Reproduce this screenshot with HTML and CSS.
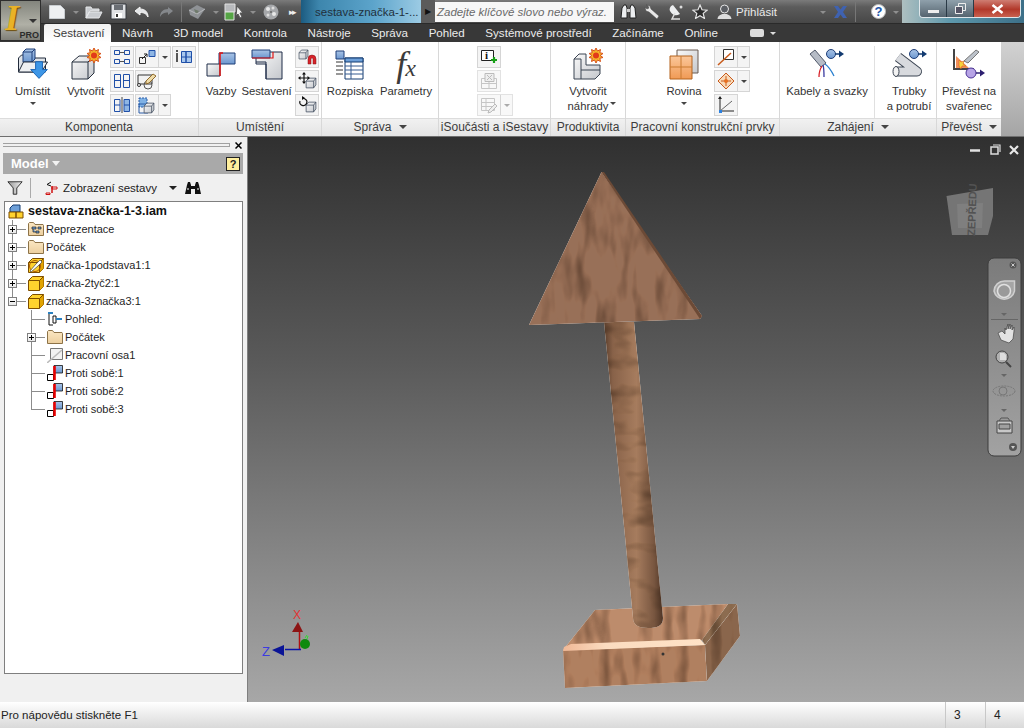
FILE: index.html
```html
<!DOCTYPE html>
<html lang="cs">
<head>
<meta charset="utf-8">
<title>Autodesk Inventor</title>
<link rel="stylesheet" href="styles.css">
</head>
<body>
<svg class="defs" aria-hidden="true">
  <defs>
    <linearGradient id="gFolder" x1="0" y1="0" x2="0" y2="1"><stop offset="0" stop-color="#fbe7c3"/><stop offset="1" stop-color="#eccf9f"/></linearGradient>
    <linearGradient id="gBlue" x1="0" y1="0" x2="0" y2="1"><stop offset="0" stop-color="#a9c4e6"/><stop offset="1" stop-color="#6c97cf"/></linearGradient>
    <linearGradient id="gCube" x1="0" y1="0" x2="1" y2="1"><stop offset="0" stop-color="#fafafa"/><stop offset="1" stop-color="#c4c7cc"/></linearGradient>
    <linearGradient id="gOrange" x1="0" y1="0" x2="0" y2="1"><stop offset="0" stop-color="#fbc79a"/><stop offset="1" stop-color="#f09a55"/></linearGradient>
    <linearGradient id="gFunnel"><stop offset="0" stop-color="#999"/><stop offset="1" stop-color="#eee"/></linearGradient>
    <symbol id="folder" viewBox="0 0 16 16"><path d="M.5 14.500V2.500l1-1h4l1.500 2h8l.5 1v10z" fill="url(#gFolder)" stroke="#8d7348"/></symbol>
    <symbol id="ycube" viewBox="0 0 16 16"><path d="M.5 5.500l4-4h11v10l-4 4H.5z" fill="#ffd22e" stroke="#7d4d00"/><path d="M11.500 5.500l4-4v10l-4 4z" fill="#e2a400"/><path d="M.5 5.500h11v10M11.500 5.500l4-4" fill="none" stroke="#7d4d00"/></symbol>
    <symbol id="mate" viewBox="0 0 16 16"><path d="M7 .5h8.500v7.500H7z" fill="url(#gBlue)" stroke="#111" stroke-width=".8"/><path d="M.5 9.500h6v6h-6z" fill="#fff" stroke="#000"/><path d="M7.500 1v14" stroke="#e80000" stroke-width="2.600"/></symbol>
    <symbol id="cubeS" viewBox="0 0 16 16"><path d="M1.500 5.500l3.500-4h9.500v9l-3 4h-10z" fill="url(#gCube)" stroke="#3d4a5c"/><path d="M1.500 5.500h10v9M11.500 5.500l3-4" fill="none" stroke="#3d4a5c"/></symbol>
  </defs>
</svg>

<header class="top">
  <div class="app">
    <span class="app-i">I</span>
    <span class="app-arrow"></span>
    <span class="app-pro">PRO</span>
  </div>
  <div class="top-right">
    <div class="titlebar">
      <span class="q"><svg width="18" height="16" viewBox="0 0 18 16"><path d="M1.500 1.500h11l4 4v9h-15z" fill="#eef0f2" stroke="#c8ccd0"/></svg></span>
      <span class="qa"></span>
      <span class="q"><svg width="18" height="14" viewBox="0 0 18 14"><path d="M1 13V2h5l1 2h7v2H5L1 13l3-6h13l-3 6z" fill="#c9ccd0" stroke="#e6e8ea"/></svg></span>
      <span class="q"><svg width="17" height="17" viewBox="0 0 17 17"><path d="M1 1h15v15H1z" fill="#dfe1e4" stroke="#30343a"/><path d="M4 2h9v5H4z" fill="#6a6e74"/><path d="M5 10h7v5H5z" fill="#fff"/><path d="M6 11h2v3H6z" fill="#333"/></svg></span>
      <span class="q"><svg width="16" height="12" viewBox="0 0 16 12"><path d="M6 1L1 5l5 4V6.500c4 0 6 1 8 4.500 0-5-3-8-8-8z" fill="#e4e6e8" stroke="#f5f5f5"/></svg></span>
      <span class="q"><svg width="16" height="12" viewBox="0 0 16 12"><path d="M10 1l5 4-5 4V6.500c-4 0-6 1-8 4.500 0-5 3-8 8-8z" fill="#85888c"/></svg></span>
      <span class="qsep"></span>
      <span class="q"><svg width="18" height="16" viewBox="0 0 18 16"><path d="M1 6l8-5 8 4-7 10-8-4z" fill="#8f9296"/><path d="M6 5l5 2-3 4z" fill="#6f7a6c"/><path d="M1 6l8 4 8-5" fill="none" stroke="#b5b7ba"/></svg></span>
      <span class="qa"></span>
      <span class="q"><svg width="21" height="18" viewBox="0 0 21 18"><path d="M1 1h10v8H1z" fill="#b8babd" stroke="#e2e2e2"/><path d="M1 9h9v8H1z" fill="#55a545" stroke="#e2e2e2"/><path d="M13 3l6 7h-3l2 4-2 1-2-4-2 2z" fill="#f2f2f2" stroke="#555"/></svg></span>
      <span class="qa"></span>
      <span class="q"><svg width="16" height="16" viewBox="0 0 16 16"><circle cx="8" cy="8" r="7.500" fill="#a5a7aa"/><circle cx="5" cy="5" r="2" fill="#e8e8e8"/><circle cx="10" cy="4" r="1.500" fill="#ddd"/><circle cx="11" cy="10" r="2" fill="#e8e8e8"/><circle cx="5" cy="11" r="1.500" fill="#ddd"/><circle cx="8" cy="8" r="1" fill="#666"/></svg></span>
      <span class="qmore">&#9656;&#9656;</span>
      <span class="doc">sestava-značka-1-...</span>
      <span class="doc-more">&#9654;</span>
      <span class="search">Zadejte klíčové slovo nebo výraz.</span>
      <span class="q"><svg width="17" height="15" viewBox="0 0 17 15"><path d="M1 14l1-10 2-3h2l1 3v10zM16 14l-1-10-2-3h-2l-1 3v10z" fill="#eceef0" stroke="#222"/><path d="M7 5h3v3H7z" fill="#ccc"/></svg></span>
      <span class="q"><svg width="17" height="16" viewBox="0 0 17 16"><path d="M2 1l4 1 1 3 8 7-2 3-8-7-3-1-1-4 2 2 2-1-1-2z" fill="#e8e8e8" stroke="#444" stroke-width=".5"/></svg></span>
      <span class="q"><svg width="17" height="16" viewBox="0 0 17 16"><path d="M2 7c3 5 6 5 10 3L5 1C2 2 1 5 2 7z" fill="#eceef0"/><path d="M7 9l-3 6h8" stroke="#ddd" fill="none" stroke-width="1.500"/><circle cx="13" cy="3" r="1.500" fill="#ddd"/></svg></span>
      <span class="q"><svg width="16" height="15" viewBox="0 0 16 15"><path d="M8 1l2 4.800 5 .4-3.800 3.200 1.200 5L8 11.700 3.600 14.400l1.200-5L1 6.200l5-.4z" fill="#2b2b2b" stroke="#e6e6e6" stroke-width="1.200"/></svg></span>
      <span class="q"><svg width="17" height="16" viewBox="0 0 17 16"><circle cx="8.500" cy="5" r="4" fill="#5a5d62" stroke="#e8e8e8"/><path d="M1.500 15c.5-4 3-4 5-5h4c2 1 4.500 1 5 5z" fill="#dcdcdc"/></svg></span>
      <span class="login">Přihlásit</span>
      <span class="qa qa-w"></span>
      <span class="q"><svg width="15" height="12" viewBox="0 0 15 12"><path d="M1 0h4l2.500 3.500L10 0h4l-4 6 4 6h-4L7.500 8.500 5 12H1l4-6z" fill="#3f62b0"/></svg></span>
      <span class="qsep qsep-r"></span>
      <span class="help">?</span>
      <span class="qa qa-h"></span>
      <div class="glass">
        <div class="wincontrols">
          <span class="wc wc-min"><i class="wc-dash"></i></span>
          <span class="wc wc-max"><svg width="11" height="11" viewBox="0 0 11 11"><path d="M3.500.5h7v7h-7z" fill="none" stroke="#eee"/><path d="M.5 3.500h7v7h-7z" fill="#556" stroke="#eee"/></svg></span>
          <span class="wc wc-close"><svg width="13" height="10" viewBox="0 0 13 10"><path d="M1.500 1l10 8M11.500 1l-10 8" stroke="#fff" stroke-width="2.500"/></svg></span>
        </div>
      </div>
    </div>
    <nav class="tabs">
      <span class="tab tab-on">Sestavení</span>
      <span class="tab">Návrh</span>
      <span class="tab">3D model</span>
      <span class="tab">Kontrola</span>
      <span class="tab">Nástroje</span>
      <span class="tab">Správa</span>
      <span class="tab">Pohled</span>
      <span class="tab">Systémové prostředí</span>
      <span class="tab">Začínáme</span>
      <span class="tab">Online</span>
      <span class="tabview"><i class="tabview-pill"></i><i class="tabview-arrow"></i></span>
    </nav>
  </div>
</header>

<section class="ribbon">
  <!-- Komponenta -->
  <div class="panel p-komp">
    <div class="pbody">
      <div class="lg w53">
        <svg class="lgi" width="32" height="32" viewBox="0 0 32 32"><path d="M1.500 24V10l3-3h8l2 3h14v14z" fill="#dfe3e8" stroke="#222c3c"/><path d="M6 4l3-3h9v10l-3 3H6z" fill="url(#gBlue)" stroke="#1f3e78"/><path d="M6 4h9v10M15 4l3-3" fill="none" stroke="#1f3e78"/><path d="M1.500 24l5-10h24l-6 10z" fill="#eef0f2" stroke="#222c3c"/><path d="M20 14h7v8h5l-8.500 9L15 22h5z" fill="#3d96e6" stroke="#1b64b4" transform="translate(-1 0) scale(.98 .98)"/></svg>
        <span class="lbl">Umístit</span>
        <i class="dd"></i>
      </div>
      <div class="lg w53">
        <svg class="lgi" width="32" height="32" viewBox="0 0 32 32"><path d="M2 14l7-6h15v17l-6 6H2z" fill="url(#gCube)" stroke="#27303e"/><path d="M2 14h16v17M18 14l6-6" fill="none" stroke="#27303e"/><path d="M24 0l1.500 3 3-1.500-.7 3.200 3.200.8-2.800 2 2.800 2-3.200.8.700 3.200-3-1.500L24 15l-1.500-3-3 1.500.7-3.200-3.200-.8 2.800-2-2.800-2 3.200-.8-.7-3.200 3 1.500z" fill="#f5b52a" stroke="#d8501a"/><circle cx="24" cy="7.500" r="3" fill="#e23a1a"/></svg>
        <span class="lbl">Vytvořit</span>
      </div>
      <div class="smcols">
        <div class="smcol">
          <span class="sm"><svg width="18" height="16" viewBox="0 0 18 16"><g fill="none" stroke="#1f4fa8"><path d="M1.500 1.500h5v4h-5zM11.500 1.500h5v4h-5zM1.500 10.500h5v4h-5zM11.500 10.500h5v4h-5z"/><path d="M6.500 3.500h5M6.500 12.500h5" stroke="#555"/></g></svg></span>
          <span class="sm"><svg width="18" height="16" viewBox="0 0 18 16"><g fill="none" stroke="#1f4fa8"><path d="M1.500 1.500h6v13h-6zM10.500 1.500h6v13h-6zM1.500 7.500h6M10.500 7.500h6"/></g></svg></span>
          <span class="sm"><svg width="18" height="16" viewBox="0 0 18 16"><g fill="none" stroke="#1f4fa8"><path d="M1.500 2.500h5.500v12H1.500zM1.500 8h5.500"/></g><path d="M9 0v16" stroke="#444"/><path d="M11 2.500h5.500v12H11z" fill="#8fb6e4" stroke="#1f4fa8"/><path d="M11 8h5.500" stroke="#1f4fa8"/></svg></span>
        </div>
        <div class="smcol">
          <span class="sm sm-split"><span class="sm-main"><svg width="18" height="16" viewBox="0 0 18 16"><path d="M1.500 8.500h6v6h-6z" fill="none" stroke="#333"/><path d="M11 1.500h6v6h-6z" fill="#8fb6e4" stroke="#1f4fa8"/><path d="M4 10L9 5M9 5H6M9 5v3" fill="none" stroke="#222"/></svg></span><i class="dd-s"></i></span>
          <span class="sm sm-wide"><svg width="22" height="18" viewBox="0 0 22 18"><path d="M2 3h14v9H2z" fill="#f2f2f2" stroke="#333"/><circle cx="12" cy="13" r="4" fill="none" stroke="#555"/><circle cx="3" cy="13" r="1.500" fill="#fff" stroke="#333"/><path d="M10 9l7-7 3 2-7 7-3 1z" fill="#eedba8" stroke="#8f6a2c"/></svg></span>
          <span class="sm sm-split"><span class="sm-main"><svg width="18" height="17" viewBox="0 0 18 17"><path d="M1 1h8v9H1z" fill="#7fb1e4" stroke="#2b5ca8" stroke-dasharray="2 1"/><path d="M1 7h9v9H1z" fill="none" stroke="#2b5ca8"/><use href="#cubeS" x="5" y="5" width="12" height="12"/></svg></span><i class="dd-s"></i></span>
        </div>
        <div class="smcol">
          <span class="sm"><svg width="18" height="14" viewBox="0 0 18 14"><path d="M2 3v9M1 1h2" stroke="#222" stroke-width="1.500"/><path d="M6.500 1.500h4.500v11H6.500zM11 1.500h5.500v11H11zM6.500 7h10" fill="#a9c8ee" stroke="#1f4fa8"/></svg></span>
        </div>
      </div>
    </div>
    <div class="pfoot">Komponenta</div>
  </div>

  <!-- Umístění -->
  <div class="panel p-umis">
    <div class="pbody">
      <div class="lg w44">
        <svg class="lgi" width="32" height="32" viewBox="0 0 32 32"><path d="M14 5h16v11H14z" fill="url(#gBlue)" stroke="#1f3e78"/><path d="M2 16h13v12H2z" fill="url(#gCube)" stroke="#1f2c48"/><path d="M15 28V5h3" fill="none" stroke="#e01515" stroke-width="1.500"/></svg>
        <span class="lbl">Vazby</span>
      </div>
      <div class="lg w47">
        <svg class="lgi" width="32" height="32" viewBox="0 0 32 32"><path d="M5 6h26v27H15V18H5z" fill="url(#gCube)" stroke="#1f2c48" transform="translate(0 -2)"/><path d="M5 14h10v17" fill="none" stroke="#1f2c48"/><path d="M1 2h18v8H1z" fill="url(#gBlue)" stroke="#1f3e78"/><path d="M1 10h21V4" fill="none" stroke="#e01515" stroke-width="1.200"/></svg>
        <span class="lbl">Sestavení</span>
      </div>
      <div class="smcol smcol-u">
        <span class="sm"><svg width="19" height="16" viewBox="0 0 19 16"><use href="#cubeS" x="0" y="0" width="11" height="11"/><path d="M10 15v-5a4 4 0 0 1 8 0v5h-3v-5a1 1 0 0 0-2 0v5z" fill="#d8232a" stroke="#801010" stroke-width=".5"/></svg></span>
        <span class="sm"><svg width="19" height="18" viewBox="0 0 19 18"><use href="#cubeS" x="7" y="5" width="12" height="12"/><path d="M6 1v10M1 6h10" stroke="#111" stroke-width="1.200"/><path d="M6 0L4 2.500h4zM6 12l-2-2.500h4zM0 6l2.500-2v4zM12 6L9.500 4v4z" fill="#111"/></svg></span>
        <span class="sm"><svg width="19" height="18" viewBox="0 0 19 18"><use href="#cubeS" x="7" y="5" width="12" height="12"/><path d="M2 5a3.500 3.500 0 1 0 5-2L5 2" fill="none" stroke="#111" stroke-width="1.200"/><path d="M4 0v4l3-2z" fill="#111"/></svg></span>
      </div>
    </div>
    <div class="pfoot">Umístění</div>
  </div>

  <!-- Správa -->
  <div class="panel p-sprava">
    <div class="pbody">
      <div class="lg w56">
        <svg class="lgi" width="32" height="32" viewBox="0 0 32 32"><path d="M2 3h8v8H2z" fill="url(#gBlue)" stroke="#1f3e78"/><path d="M2 14h7M2 18h7M2 22h7M2 26h7" stroke="#333"/><path d="M11 10h18v21H11z" fill="#fff" stroke="#123a70"/><path d="M11 10h18v4H11z" fill="#6d9fd8" stroke="#123a70"/><path d="M11 18h18M11 22h18M11 26h18M17 14v17" stroke="#345a90"/></svg>
        <span class="lbl">Rozpiska</span>
      </div>
      <div class="lg w56">
        <span class="fx"><i>f</i><i class="fx-x">x</i></span>
        <span class="lbl">Parametry</span>
      </div>
    </div>
    <div class="pfoot">Správa<i class="ft-dd"></i></div>
  </div>

  <!-- iSoučásti -->
  <div class="panel p-isou">
    <div class="pbody pbody-c">
      <div class="smcol smcol-i">
        <span class="sm"><svg width="18" height="16" viewBox="0 0 18 16"><path d="M1.500 1.500h12v10h-12z" fill="#fff" stroke="#222"/><text x="5" y="10" class="i-t">i</text><path d="M11 11h6M14 8v6" stroke="#18a018" stroke-width="2.200"/></svg></span>
        <span class="sm sm-off"><svg width="18" height="18" viewBox="0 0 18 18"><path d="M1.500 6.500h15v10h-15zM1.500 11.500h15M9 6.500v10" fill="none" stroke="#c6c6c6"/><path d="M5 1.500h9v8H5z" fill="#eee" stroke="#bbb"/><path d="M7 3l5 5M12 3L7 8" stroke="#bbb"/></svg></span>
        <span class="sm sm-split sm-off"><span class="sm-main"><svg width="18" height="17" viewBox="0 0 18 17"><path d="M1.500 1.500h13v12h-13zM1.500 5.500h13M1.500 9.500h13M6 1.500v12" fill="none" stroke="#c6c6c6"/><path d="M9 13l6-6 2 2-6 6-3 1z" fill="#eee" stroke="#bbb"/></svg></span><i class="dd-s dd-off"></i></span>
      </div>
    </div>
    <div class="pfoot">iSoučásti a iSestavy</div>
  </div>

  <!-- Produktivita -->
  <div class="panel p-prod">
    <div class="pbody">
      <div class="lg w-full">
        <svg class="lgi" width="32" height="32" viewBox="0 0 32 32"><path d="M2 11l5-5h7v11h14v9l-5 5H2z" fill="url(#gCube)" stroke="#3b4452"/><path d="M2 11h7v11h19M9 22v9M7 6L2 11" fill="none" stroke="#3b4452"/><path d="M24 0l1.500 3 3-1.500-.7 3.200 3.200.8-2.800 2 2.800 2-3.200.8.700 3.200-3-1.500L24 15l-1.500-3-3 1.500.7-3.200-3.200-.8 2.800-2-2.800-2 3.200-.8-.7-3.200 3 1.500z" fill="#f5b52a" stroke="#d8501a"/><circle cx="24" cy="7.500" r="3" fill="#e23a1a"/></svg>
        <span class="lbl">Vytvořit<br>náhrady<i class="dd-in"></i></span>
      </div>
    </div>
    <div class="pfoot">Produktivita</div>
  </div>

  <!-- Pracovní konstrukční prvky -->
  <div class="panel p-prac">
    <div class="pbody">
      <div class="lg w-rov">
        <svg class="lgi" width="32" height="32" viewBox="0 0 32 32"><path d="M9 2h21v23H9z" fill="url(#gCube)" stroke="#6a5a50"/><path d="M2 8h22v23H2z" fill="url(#gOrange)" stroke="#b4621c"/><path d="M2 19h22M13 8v23" stroke="#c97a30"/></svg>
        <span class="lbl">Rovina</span>
        <i class="dd"></i>
      </div>
      <div class="smcol">
        <span class="sm sm-split"><span class="sm-main"><svg width="18" height="18" viewBox="0 0 18 18"><path d="M6.500 1.500h10v10h-10z" fill="#fff" stroke="#333"/><path d="M1 17L14 5" stroke="#c85a1a" stroke-width="1.500"/></svg></span><i class="dd-s"></i></span>
        <span class="sm sm-split"><span class="sm-main"><svg width="18" height="18" viewBox="0 0 18 18"><path d="M9 1l8 8-8 8-8-8z" fill="#f8d9b8" stroke="#c85a1a"/><path d="M9 4v10M4 9h10" stroke="#c85a1a"/><circle cx="9" cy="9" r="2" fill="#e87020"/></svg></span><i class="dd-s"></i></span>
        <span class="sm"><svg width="18" height="18" viewBox="0 0 18 18"><path d="M3 1v14h14" fill="none" stroke="#222"/><path d="M3 15L15 5" stroke="#666"/><path d="M1 3l2-3 2 3z" fill="#222"/><path d="M2 14h3v3H2z" fill="#2a80e0"/></svg></span>
      </div>
    </div>
    <div class="pfoot">Pracovní konstrukční prvky</div>
  </div>

  <!-- Zahájení -->
  <div class="panel p-zah">
    <div class="pbody">
      <div class="lg w-kab">
        <svg class="lgi" width="36" height="32" viewBox="0 0 36 32"><path d="M1 6l5-4 11 13-5 4z" fill="#b6bcc6" stroke="#50596a"/><path d="M13 18c-2 3-3 6-3 11" fill="none" stroke="#d8232a" stroke-width="1.300"/><path d="M14 17c1 3 1 6 1 12" fill="none" stroke="#3a3aa0" stroke-width="1.300"/><path d="M16 16c3 2 6 6 9 12" fill="none" stroke="#2a80d0" stroke-width="1.300"/><circle cx="22" cy="6" r="4.500" fill="url(#gBlue)" stroke="#1f3e78"/><path d="M26 6h4" stroke="#123a70" stroke-width="1.500"/><path d="M30 2.500l5 3.500-5 3.500z" fill="#123a70"/></svg>
        <span class="lbl">Kabely a svazky</span>
      </div>
      <i class="vline"></i>
      <div class="lg w-tru">
        <svg class="lgi" width="36" height="32" viewBox="0 0 36 32"><path d="M7 9L26 23.500H6" fill="none" stroke="#3b4452" stroke-width="10" stroke-linejoin="round"/><path d="M7 9L26 23.500H6" fill="none" stroke="#d8dade" stroke-width="8" stroke-linejoin="round"/><ellipse cx="5" cy="23.500" rx="3" ry="5" fill="#f2f2f2" stroke="#3b4452"/><circle cx="23" cy="6" r="4.500" fill="url(#gBlue)" stroke="#1f3e78"/><path d="M27 6h4" stroke="#123a70" stroke-width="1.500"/><path d="M31 2.500l5 3.500-5 3.500z" fill="#123a70"/></svg>
        <span class="lbl">Trubky<br>a potrubí</span>
      </div>
    </div>
    <div class="pfoot">Zahájení<i class="ft-dd"></i></div>
  </div>

  <!-- Převést -->
  <div class="panel p-prev">
    <div class="pbody">
      <div class="lg w-full">
        <svg class="lgi" width="34" height="32" viewBox="0 0 34 32"><path d="M2 1v20h20" fill="none" stroke="#444" stroke-width="2"/><path d="M4 8l13 12H4z" fill="#f0905a"/><path d="M7 12l2 2 3-1-1 3 3 2-4 0-1 3-2-3z" fill="#f6d23c" stroke="#d8501a" stroke-width=".5"/><path d="M12 13L24 2l3 2-11 11z" fill="#bcc2ca" stroke="#777"/><circle cx="19" cy="25" r="5" fill="#b7a4e6" stroke="#4a3296"/><path d="M24 25h4" stroke="#2c1f70" stroke-width="1.500"/><path d="M28 21.500l5 3.500-5 3.500z" fill="#2c1f70"/></svg>
        <span class="lbl">Převést na<br>svařenec</span>
      </div>
    </div>
    <div class="pfoot">Převést<i class="ft-dd"></i></div>
  </div>
  <div class="ribbon-end"></div>
</section>

<main class="work">
  <aside class="browser">
    <div class="grip"><i class="grip-lines"></i><svg class="grip-x" width="7" height="7" viewBox="0 0 7 7"><path d="M.5.500l6 6M6.500.500l-6 6" stroke="#000" stroke-width="1.500"/></svg></div>
    <div class="model-h"><span>Model</span><i class="model-dd"></i><span class="model-help">?</span></div>
    <div class="model-tb">
      <svg width="16" height="16" viewBox="0 0 18 16"><path d="M1 1h16l-6 7v7H7V8z" fill="url(#gFunnel)" stroke="#222"/></svg>
      <i class="tb-sep"></i>
      <svg class="tb-view" width="14" height="14" viewBox="0 0 14 14"><path d="M7 1L3 3.500 7 5" fill="none" stroke="#111"/><path d="M8 5v7" stroke="#d01010" stroke-width="1.500"/><path d="M2 12h4v1.500H2zM8 6h5v2H8z" fill="none" stroke="#d01010"/></svg>
      <span class="tb-text">Zobrazení sestavy</span>
      <i class="tb-dd"></i>
      <svg class="tb-bin" width="16" height="14" viewBox="0 0 16 14"><path d="M0 13l2-9 1-3h2l1 3v9zM16 13l-2-9-1-3h-2l-1 3v9zM6 5h4v3H6z" fill="#111"/><path d="M2 8h2M12 8h2" stroke="#fff"/></svg>
    </div>
    <div class="tree">
      <div class="row row-root"><svg class="ti" width="18" height="16" viewBox="0 0 18 16"><path d="M2 5l3-3h7v7H2z" fill="#6d9fd8" stroke="#123a70"/><path d="M1 9h7v6H1zM8 9h7v6H8z" fill="#ffd22e" stroke="#7d4d00"/></svg><span class="rt rt-b">sestava-značka-1-3.iam</span></div>
      <div class="row"><span class="g g-t"><i class="ex ex-p"></i></span><svg class="ti" width="16" height="16" viewBox="0 0 16 16"><use href="#folder"/><path d="M4 6h4v2H4zM10 6h3v2h-3zM5 8v3h3M8 10h3v2H8z" fill="#6d9fd8" stroke="#222" stroke-width=".7"/></svg><span class="rt">Reprezentace</span></div>
      <div class="row"><span class="g g-t"><i class="ex ex-p"></i></span><svg class="ti" width="16" height="16" viewBox="0 0 16 16"><use href="#folder"/></svg><span class="rt">Počátek</span></div>
      <div class="row"><span class="g g-t"><i class="ex ex-p"></i></span><svg class="ti" width="16" height="16" viewBox="0 0 16 16"><use href="#ycube"/><circle cx="7" cy="9" r="5.500" fill="none" stroke="#b05a00"/><path d="M2 14l6-7 4-4 2 2-4 4-7 6z" fill="#fff" stroke="#444" stroke-width=".7"/></svg><span class="rt">značka-1podstava1:1</span></div>
      <div class="row"><span class="g g-t"><i class="ex ex-p"></i></span><svg class="ti" width="16" height="16" viewBox="0 0 16 16"><use href="#ycube"/></svg><span class="rt">značka-2tyč2:1</span></div>
      <div class="row"><span class="g g-l"><i class="ex"></i></span><svg class="ti" width="16" height="16" viewBox="0 0 16 16"><use href="#ycube"/></svg><span class="rt">značka-3značka3:1</span></div>
      <div class="row row-2"><span class="g2 g-t"></span><svg class="ti" width="16" height="16" viewBox="0 0 16 16"><path d="M1 1h5v2H1z" fill="#2a80c0"/><path d="M2 3v11h4M6 5h3v7H6z" fill="none" stroke="#111"/><path d="M9 7h6v2H9z" fill="#2a80c0"/></svg><span class="rt">Pohled:</span></div>
      <div class="row row-2"><span class="g2 g-t"><i class="ex ex-p"></i></span><svg class="ti" width="16" height="16" viewBox="0 0 16 16"><use href="#folder"/></svg><span class="rt">Počátek</span></div>
      <div class="row row-2"><span class="g2 g-t"></span><svg class="ti" width="16" height="16" viewBox="0 0 16 16"><path d="M3.500 1.500h12v11h-12z" fill="#f2f2f2" stroke="#777"/><path d="M0 16L15 3" stroke="#bbb" stroke-width="1.500"/></svg><span class="rt">Pracovní osa1</span></div>
      <div class="row row-2"><span class="g2 g-t"></span><svg class="ti" width="16" height="16" viewBox="0 0 16 16"><use href="#mate"/></svg><span class="rt">Proti sobě:1</span></div>
      <div class="row row-2"><span class="g2 g-t"></span><svg class="ti" width="16" height="16" viewBox="0 0 16 16"><use href="#mate"/></svg><span class="rt">Proti sobě:2</span></div>
      <div class="row row-2"><span class="g2 g-l"></span><svg class="ti" width="16" height="16" viewBox="0 0 16 16"><use href="#mate"/></svg><span class="rt">Proti sobě:3</span></div>
    </div>
  </aside>

  <div class="viewport">
    <svg class="scene" width="776" height="565" viewBox="248 137 776 565">
      <defs>
        <filter id="wood" x="0" y="0" width="100%" height="100%" color-interpolation-filters="sRGB">
          <feTurbulence type="fractalNoise" baseFrequency="0.09 0.02" numOctaves="3" seed="11"/>
          <feGaussianBlur stdDeviation="1"/>
          <feColorMatrix values=".8 0 0 0 .58  .85 0 0 0 .54  .9 0 0 0 .5  0 0 0 0 1"/>
          <feComposite in2="SourceGraphic" operator="in" result="n"/>
          <feBlend in="n" in2="SourceGraphic" mode="multiply"/>
        </filter>
        <filter id="ring" x="0" y="0" width="100%" height="100%" color-interpolation-filters="sRGB">
          <feTurbulence type="fractalNoise" baseFrequency="0.03 0.07" numOctaves="3" seed="4"/>
          <feGaussianBlur stdDeviation="1"/>
          <feColorMatrix values=".7 0 0 0 .65  .75 0 0 0 .62  .8 0 0 0 .58  0 0 0 0 1"/>
          <feComposite in2="SourceGraphic" operator="in" result="n"/>
          <feBlend in="n" in2="SourceGraphic" mode="multiply"/>
        </filter>
        <linearGradient id="gPole" x1="0" y1="0" x2="1" y2="0">
          <stop offset="0" stop-color="#5a3e2c"/><stop offset=".15" stop-color="#886249"/><stop offset=".55" stop-color="#a67c5e"/><stop offset=".85" stop-color="#785640"/><stop offset="1" stop-color="#4e3526"/>
        </linearGradient>
        <linearGradient id="gStrip" x1="0" y1="0" x2="1" y2="0"><stop offset="0" stop-color="#f0b896"/><stop offset=".3" stop-color="#fbdcc0"/><stop offset="1" stop-color="#ffe2c6"/></linearGradient>
        <linearGradient id="gNav" x1="0" y1="0" x2="0" y2="1"><stop offset="0" stop-color="#7b7b7b"/><stop offset="1" stop-color="#a2a2a2"/></linearGradient>
      </defs>
      <!-- base -->
      <polygon points="595,610 728,604 703,640 563,650" fill="#bd8c6c" filter="url(#wood)"/>
      <polygon points="563,650 705,645 707,681 565,688" fill="#b08060" filter="url(#wood)"/>
      <polygon points="705,645 737,604 740,636 707,681" fill="#8a664c" filter="url(#wood)"/>
      <polygon points="702,640 728,604 737,604 705,645" fill="#8c6c50" filter="url(#wood)"/>
      <polygon points="564,647 571,644 700,639 705,645 563,651" fill="url(#gStrip)"/>
      <circle cx="663" cy="654" r="1.500" fill="#333"/>
      <!-- pole -->
      <path d="M604 322h30l29 296c0 8-6 10-15 10s-15-3-15-10z" fill="url(#gPole)" filter="url(#ring)"/>
      <!-- sign -->
      <polygon points="601.500,172 702,316 700,319 529,325" fill="#987058" filter="url(#wood)"/>
      <polygon points="601.500,172 604,172 702,316 700,319" fill="#6c4a36"/>
      <!-- triad -->
      <path d="M299.500 650v-22" stroke="#b01010" stroke-width="1.500"/>
      <path d="M298 622l5 10h-11z" fill="#8c1414"/>
      <path d="M301 649.500h-16" stroke="#0a14a8" stroke-width="1.500"/>
      <path d="M272 650l12-5v11z" fill="#0a1496"/>
      <circle cx="305" cy="644" r="5" fill="#0e8a0e"/>
      <path d="M305 638l2-3M308 636l-1 3" stroke="#2ee02e"/>
      <text x="293" y="619" class="ax ax-x">X</text>
      <text x="262" y="656" class="ax ax-z">Z</text>
      <!-- viewport controls -->
      <path d="M970 150.500h10" stroke="#e2e2e2" stroke-width="2.500"/>
      <path d="M991 147h7v7h-7z" fill="#333" stroke="#ddd" stroke-width="1.500"/>
      <path d="M993 145h7v7" fill="none" stroke="#ddd" stroke-width="1.200"/>
      <path d="M1010 146l8 8M1018 146l-8 8" stroke="#e8e8e8" stroke-width="2.200"/>
      <!-- view cube -->
      <polygon points="946.500,196 993,188 993,216 988,235 952,235" fill="#757575"/>
      <polygon points="957,204 983,203 982,228 958,228" fill="#7f7f7f"/>
      <text transform="translate(975 236) rotate(-88)" class="vc">ZEPŘEDU</text>
      <!-- navigation bar -->
      <g>
        <rect x="988" y="258" width="33" height="198" rx="6" fill="url(#gNav)" stroke="#3c3c3c"/>
        <circle cx="1013" cy="265" r="3.500" fill="#555"/><path d="M1011.500 263.500l3 3M1014.500 263.500l-3 3" stroke="#ccc"/>
        <path d="M994 291a10.500 10.500 0 0 1 10.500-10h10v10a10.500 10.500 0 0 1-20.500 0z" fill="#a5a5a5" stroke="#cfcfcf" stroke-width="1.500"/>
        <circle cx="1004" cy="291" r="6.500" fill="#9a9a9a" stroke="#e0e0e0" stroke-width="1.500"/>
        <path d="M1001 313h6l-3 3z" fill="#666"/>
        <path d="M991 319.500h27" stroke="#666"/>
        <path d="M998 333l3 7 8 3 4-4 1-8v-4l-2 3v-5l-2 4v-5l-2 5v-5l-2 6-1-2v6l-3-3z" fill="#e2e2e2" stroke="#444" stroke-width=".7"/>
        <circle cx="1002" cy="357" r="6" fill="#b0b0b0" stroke="#444"/>
        <path d="M1000 353h4l2 2v5h-6z" fill="#ddd"/>
        <path d="M1006 362l5 5" stroke="#444" stroke-width="2"/>
        <path d="M1001 374h6l-3 3z" fill="#666"/>
        <ellipse cx="1004" cy="391" rx="11" ry="5" fill="none" stroke="#777" stroke-dasharray="2 1"/>
        <circle cx="1003" cy="391" r="4" fill="none" stroke="#777"/>
        <path d="M1001 409h6l-3 3z" fill="#666"/>
        <path d="M997 421h15v12h-15z" fill="#c8c8c8" stroke="#444"/>
        <path d="M999 424h11v5h-11z" fill="#a0a0a0" stroke="#444"/>
        <path d="M999 421l2-3h7l2 3" fill="none" stroke="#555"/>
        <circle cx="1013" cy="447" r="4" fill="#555"/><path d="M1011 446h4l-2 3z" fill="#ccc"/>
      </g>
    </svg>
  </div>
</main>

<footer class="status">
  <span class="st-msg">Pro nápovědu stiskněte F1</span>
  <span class="st-c st-3">3</span>
  <span class="st-c st-4">4</span>
</footer>
</body>
</html>
```

FILE: styles.css
```css
* { box-sizing: border-box; }
html, body { margin: 0; padding: 0; }
body {
  width: 1024px;
  height: 728px;
  overflow: hidden;
  display: flex;
  flex-direction: column;
  font: 12px "Liberation Sans", Arial, sans-serif;
  color: #333;
  background: #f0f0f0;
}
i { font-style: normal; display: block; }
.defs { position: absolute; width: 0; height: 0; }

/* ---- top ---- */
.top { display: flex; height: 42px; background: #383838; flex: none; }
.app {
  position: relative;
  width: 41px;
  height: 41px;
  flex: none;
  background: linear-gradient(#83857d, #b0b0a6 60%, #7f7f78);
  border: 1px solid #2e2e2e;
}
.app-i {
  position: absolute;
  left: 4px;
  top: 0;
  font: italic bold 36px/34px "Liberation Serif", serif;
  color: #e9b227;
  text-shadow: 1px 1px 1px #6e4e0c;
}
.app-arrow {
  position: absolute;
  right: 3px;
  top: 18px;
  border: 4px solid transparent;
  border-top: 4px solid #333;
}
.app-pro { position: absolute; right: 1px; bottom: 0; font: bold 9px/10px "Liberation Sans", sans-serif; color: #2b2b2b; }
.top-right { flex: 1; min-width: 0; display: flex; flex-direction: column; }
.titlebar {
  height: 24px;
  display: flex;
  align-items: center;
  padding-left: 4px;
  background: linear-gradient(#7b7b7b, #5c5c5c 30%, #474747);
  border-bottom: 1px solid #2a2a2a;
}
.q { width: 24px; height: 23px; flex: none; display: flex; align-items: center; justify-content: center; }
.qa { width: 13px; flex: none; height: 8px; position: relative; }
.qa::after {
  content: "";
  position: absolute;
  left: 4px;
  top: 3px;
  border: 3px solid transparent;
  border-top: 3px solid #8f8f8f;
}
.qa-w { width: 12px; }
.qa-h { width: 10px; }
.qsep { width: 7px; height: 22px; flex: none; position: relative; }
.qsep::after { content: ""; position: absolute; left: 3px; top: 1px; width: 1px; height: 20px; background: #777; }
.qsep-r { width: 6px; margin-right: 6px; }
.qmore { width: 18px; flex: none; color: #eee; font-size: 9px; letter-spacing: -2px; text-align: center; }
.doc {
  width: 120px;
  height: 23px;
  flex: none;
  display: flex;
  align-items: center;
  padding-left: 14px;
  overflow: hidden;
  white-space: nowrap;
  color: #22303c;
  font-size: 11.500px;
  background: linear-gradient(90deg, #1c5b80, #3d86ad 15%, #5ca4cb 60%, #9ccbe4);
}
.doc-more { width: 14px; flex: none; text-align: center; color: #111; font-size: 8px; background: #5b5b5b; height: 23px; line-height: 23px; }
.search {
  width: 179px;
  height: 20px;
  flex: none;
  margin-right: 2px;
  background: #f7f7f7;
  color: #6a6a6a;
  font-style: italic;
  font-size: 11.500px;
  line-height: 20px;
  padding-left: 2px;
  white-space: nowrap;
  overflow: hidden;
}
.login { width: 80px; flex: none; color: #eaeaea; font-size: 11.500px; }
.help {
  width: 15px;
  height: 15px;
  flex: none;
  border-radius: 50%;
  background: #fff;
  border: 1px solid #bbb;
  color: #2456a8;
  font: bold 13px/13px "Liberation Sans", sans-serif;
  text-align: center;
  margin-right: 3px;
  margin-left: 7px;
}
.glass {
  flex: 1;
  align-self: stretch;
  margin-left: 3px;
  display: flex;
  justify-content: flex-end;
  background: linear-gradient(90deg, #aebfc0, #5d98ac 40%, #3c6f88);
}
.wincontrols {
  display: flex;
  height: 18px;
  margin-right: 3px;
  border: 1px solid #dfe6ea;
  border-top: 0;
  border-radius: 0 0 4px 4px;
  overflow: hidden;
}
.wc { display: flex; align-items: center; justify-content: center; height: 100%; }
.wc-min, .wc-max { width: 27px; background: linear-gradient(#8fa0ab, #55646f); border-right: 1px solid #2a3a46; }
.wc-dash { width: 11px; height: 3px; background: #eee; margin-top: 5px; }
.wc-close { width: 46px; background: linear-gradient(#cf7d72, #b2382a 55%, #c9614f); }

.tabs { flex: 1; display: flex; align-items: stretch; padding-left: 3px; background: #383838; font-size: 11.600px; }
.tab { padding: 0 10px; color: #ececec; line-height: 18px; white-space: nowrap; margin-right: .6px; }
.tab-on {
  padding: 0 9px;
  width: 67px;
  color: #3b3b3b;
  background: linear-gradient(#f0f0f0, #fff);
  border-radius: 2px 2px 0 0;
  margin-right: 1px;
}
.tabview { display: flex; align-items: center; margin-left: 21px; gap: 6px; }
.tabview-pill { width: 14px; height: 8px; border-radius: 2px; background: #ddd; }
.tabview-arrow { border: 3px solid transparent; border-top: 3px solid #ddd; margin-top: 3px; }

/* ---- ribbon ---- */
.ribbon {
  height: 95px;
  flex: none;
  display: flex;
  background: #fff;
  border-bottom: 1px solid #6e6e6e;
}
.panel { display: flex; flex-direction: column; flex: none; border-right: 1px solid #d8d8d8; }
.p-komp { width: 199px; }
.p-umis { width: 123px; }
.p-sprava { width: 117px; }
.p-isou { width: 112px; }
.p-prod { width: 75px; }
.p-prac { width: 154px; }
.p-zah { width: 157px; }
.p-prev { width: 64px; border-right: 0; }
.ribbon-end { flex: 1; background: linear-gradient(#d2d2d2, #a5a5a5); }
.pbody { flex: 1; min-height: 0; display: flex; padding-top: 4px; }
.pbody-c { justify-content: center; }
.pfoot {
  height: 18px;
  flex: none;
  display: flex;
  align-items: center;
  justify-content: center;
  gap: 7px;
  padding-bottom: 2px;
  background: linear-gradient(#f1f1f1, #e4e4e4);
  color: #3c3c3c;
  border-top: 1px solid #dcdcdc;
  white-space: nowrap;
}
.ft-dd { border: 4px solid transparent; border-top: 4px solid #444; margin-top: 4px; }
.lg { display: flex; flex-direction: column; align-items: center; flex: none; color: #333; padding-top: 2px; }
.w44 { width: 44px; }
.w47 { width: 47px; margin-right: 5px; }
.w53 { width: 53px; }
.w56 { width: 56px; }
.w-full { width: 100%; }
.w-rov { width: 88px; padding-left: 28px; }
.w-kab { width: 94px; }
.w-tru { width: 56px; margin-left: 6px; }
.p-komp .pbody { padding-left: 6px; }
.lgi { display: block; height: 32px; }
.lbl { margin-top: 4px; line-height: 15px; text-align: center; white-space: nowrap; position: relative; font-size: 11.300px; }
.dd { margin-top: 3px; border: 3px solid transparent; border-top: 3px solid #444; }
.dd-in { position: absolute; right: -8px; bottom: 6px; border: 3px solid transparent; border-top: 3px solid #444; }
.fx {
  display: flex;
  align-items: baseline;
  height: 32px;
  font: 36px/32px "Liberation Serif", serif;
  color: #3b3b3b;
}
.fx i { font-style: italic; }
.fx .fx-x { font-size: 24px; margin-left: -1px; }
.smcols { display: flex; gap: 1px; margin-left: -2px; }
.smcol { display: flex; flex-direction: column; gap: 2px; flex: none; }
.sm {
  width: 24px;
  height: 22px;
  display: flex;
  align-items: center;
  justify-content: center;
  background: #f4f4f4;
  border: 1px solid #d5d5d5;
}
.sm-split { width: 36px; justify-content: flex-start; }
.sm-main { width: 23px; height: 100%; display: flex; align-items: center; justify-content: center; border-right: 1px solid #d5d5d5; }
.dd-s { margin: 3px 0 0 3px; border: 3px solid transparent; border-top: 3px solid #444; }
.dd-off { border-top-color: #aaa; }
.sm-off { background: #f8f8f8; border-color: #e2e2e2; }
.i-t { font: bold 11px "Liberation Serif", serif; fill: #111; }
.vline { width: 1px; height: 72px; flex: none; background: #e0e0e0; }

/* ---- work area ---- */
.work { flex: 1; min-height: 0; display: flex; }
.browser { width: 248px; flex: none; display: flex; flex-direction: column; background: #f0f0f0; border-right: 1px solid #7f7f7f; padding: 0 0 0 3px; }
.grip { display: flex; align-items: center; height: 16px; padding-right: 5px; gap: 5px; flex: none; }
.grip-lines { flex: 1; height: 4px; border: 1px solid #a0a0a0; border-width: 1px 1px 1px 0; }
.model-h {
  height: 21px;
  margin-right: 4px;
  flex: none;
  display: flex;
  align-items: center;
  padding-left: 8px;
  background: #a9a9a9;
  color: #fff;
  font-weight: bold;
  font-size: 13px;
}
.model-dd { margin: 4px 0 0 3px; border: 4px solid transparent; border-top: 5px solid #f2f2f2; }
.model-help {
  margin-left: auto;
  margin-right: 3px;
  width: 14px;
  height: 14px;
  background: #ffef9e;
  border: 1px solid #222;
  color: #222;
  font-size: 11px;
  line-height: 12px;
  text-align: center;
}
.model-tb { height: 27px; flex: none; display: flex; align-items: center; padding-left: 4px; padding-right: 4px; color: #222; font-size: 11.500px; }
.tb-sep { width: 1px; height: 20px; background: #aaa; margin: 0 13px 0 7px; }
.tb-view { margin-right: 5px; }
.tb-text { white-space: nowrap; }
.tb-dd { margin: 4px 0 0 12px; border: 4px solid transparent; border-top: 4px solid #222; }
.tb-bin { margin-left: 8px; }
.tree { height: 473px; margin-right: 4px; margin-left: 1px; background: #fff; border: 1px solid #7f7f7f; flex: none; font-size: 11px; }
.row { display: flex; align-items: center; height: 18px; white-space: nowrap; color: #1f1f1f; }
.row-root { padding-left: 3px; }
.row-2 { padding-left: 19px; }
.ti { flex: none; }
.rt { margin-left: 2px; }
.rt-b { font-weight: bold; font-size: 12.500px; color: #111; margin-left: 2px; }
.g, .g2 { width: 23px; height: 18px; flex: none; position: relative; }
.g::before, .g2::before { content: ""; position: absolute; left: 7px; width: 1px; background: #8c8c8c; top: 0; height: 100%; }
.g-l::before { height: 50%; }
.g::after, .g2::after { content: ""; position: absolute; left: 7px; top: 9px; height: 1px; width: 14px; background: #8c8c8c; }
.ex {
  position: absolute;
  z-index: 1;
  left: 3px;
  top: 5px;
  width: 9px;
  height: 9px;
  background: linear-gradient(#fff, #e8e8e8);
  border: 1px solid #7f7f7f;
}
.ex::before { content: ""; position: absolute; left: 1px; top: 3px; width: 5px; height: 1px; background: #000; }
.ex-p::after { content: ""; position: absolute; left: 3px; top: 1px; width: 1px; height: 5px; background: #000; }

.viewport {
  flex: 1;
  min-width: 0;
  position: relative;
  overflow: hidden;
  background: linear-gradient(#303030, #5a5a5a 40%, #a7a7a7);
}
.scene { position: absolute; left: 0; top: 0; display: block; }
.ax { font: 12px "Liberation Sans", sans-serif; }
.ax-x { fill: #e23333; }
.ax-z { fill: #3c3ce0; font-size: 13px; }
.vc { font: bold 11px "Liberation Sans", sans-serif; fill: #525252; }

/* ---- status ---- */
.status {
  height: 26px;
  flex: none;
  display: flex;
  align-items: center;
  background: linear-gradient(#fff, #d9d9d9);
  color: #222;
  padding-left: 1px;
  font-size: 11.500px;
}
.st-msg { flex: 1; }
.st-c { height: 100%; line-height: 27px; border-left: 1px solid #c8c8c8; padding-left: 8px; font-size: 12px; }
.st-3 { width: 40px; }
.st-4 { width: 39px; }
```
